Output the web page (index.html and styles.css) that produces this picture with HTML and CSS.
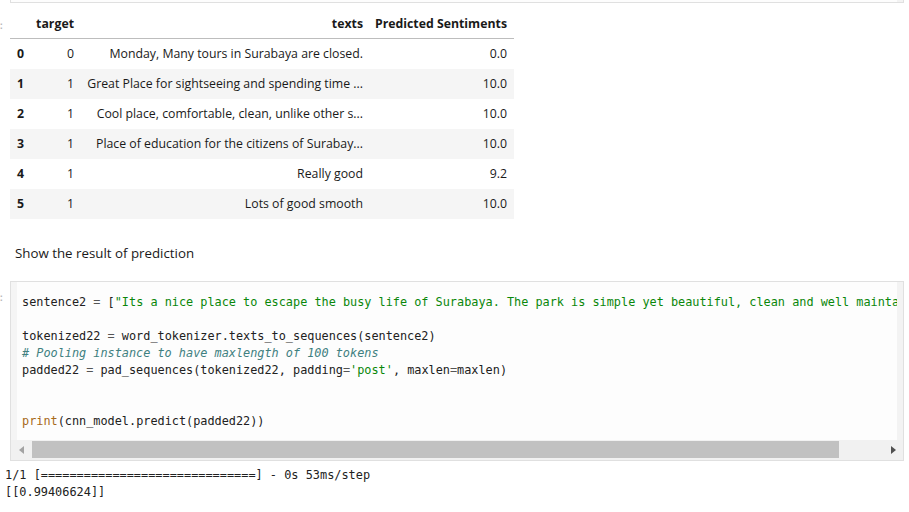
FILE: index.html
```html
<!DOCTYPE html>
<html>
<head>
<meta charset="utf-8">
<link rel="stylesheet" href="styles.css">
</head>
<body>
<div class="prev-cell"><div class="prev-fill"></div><div class="prev-strip"></div></div>

<div class="out-row">
  <div class="prompt prompt-table">:</div>
  <table class="df">
    <colgroup>
      <col class="c-idx"><col class="c-target"><col class="c-texts"><col class="c-pred">
    </colgroup>
    <thead>
      <tr><th></th><th>target</th><th>texts</th><th>Predicted Sentiments</th></tr>
    </thead>
    <tbody>
      <tr><th>0</th><td>0</td><td>Monday, Many tours in Surabaya are closed.</td><td>0.0</td></tr>
      <tr><th>1</th><td>1</td><td>Great Place for sightseeing and spending time ...</td><td>10.0</td></tr>
      <tr><th>2</th><td>1</td><td>Cool place, comfortable, clean, unlike other s...</td><td>10.0</td></tr>
      <tr><th>3</th><td>1</td><td>Place of education for the citizens of Surabay...</td><td>10.0</td></tr>
      <tr><th>4</th><td>1</td><td>Really good</td><td>9.2</td></tr>
      <tr><th>5</th><td>1</td><td>Lots of good smooth</td><td>10.0</td></tr>
    </tbody>
  </table>
</div>

<div class="md">Show the result of prediction</div>

<div class="code-row">
  <div class="prompt prompt-code">:</div>
  <div class="cell">
    <div class="cell-body">
      <div class="gutter"></div>
      <pre class="editor"><span class="v">sentence2</span> <span class="o">=</span> [<span class="s">"Its a nice place to escape the busy life of Surabaya. The park is simple yet beautiful, clean and well maintained. Good for family."</span>]

<span class="v">tokenized22</span> <span class="o">=</span> <span class="v">word_tokenizer</span>.<span class="v">texts_to_sequences</span>(<span class="v">sentence2</span>)
<span class="c"># Pooling instance to have maxlength of 100 tokens</span>
<span class="v">padded22</span> <span class="o">=</span> <span class="v">pad_sequences</span>(<span class="v">tokenized22</span>, <span class="v">padding</span><span class="o">=</span><span class="s">'post'</span>, <span class="v">maxlen</span><span class="o">=</span><span class="v">maxlen</span>)


<span class="b">print</span>(<span class="v">cnn_model</span>.<span class="v">predict</span>(<span class="v">padded22</span>))</pre>
      <div class="vstrip"></div>
    </div>
    <div class="hscroll">
      <div class="sbtn"><span class="tri tri-left"></span></div>
      <div class="thumb"></div>
      <div class="track-rest"></div>
      <div class="sbtn"><span class="tri tri-right"></span></div>
    </div>
  </div>
</div>

<pre class="output">1/1 [==============================] - 0s 53ms/step
[[0.99406624]]</pre>
</body>
</html>
```
FILE: styles.css
```css
html, body {
  margin: 0;
  padding: 0;
  background: #ffffff;
}

body {
  font-family: "Open Sans", "Noto Sans", sans-serif;
  color: #1a1a1a;
  width: 909px;
  overflow: hidden;
}

/* bottom edge of the previous code cell */
.prev-cell {
  margin-left: 10px;
  width: 894px;
  height: 3px;
  box-sizing: border-box;
  border: 1px solid #e0e0e0;
  border-top: none;
  display: flex;
}
.prev-fill {
  flex: 1;
  background: #fdfdfd;
}
.prev-strip {
  width: 6px;
  background: #f3f3f3;
}

/* prompt column (mostly clipped) */
.prompt {
  flex: none;
  font-family: "DejaVu Sans Mono", monospace;
  font-size: 11px;
  color: #b8b8b8;
  line-height: 14px;
  overflow: hidden;
  margin-left: -2px;
  width: 12px;
}
.prompt-table {
  padding-top: 10px;
}
.prompt-code {
  padding-top: 10px;
}

/* dataframe output */
.out-row {
  display: flex;
  margin-top: 6px;
}

.df {
  border-collapse: collapse;
  table-layout: fixed;
  width: 504px;
  font-size: 12.3px;
  color: #1a1a1a;
}
.c-idx { width: 20px; }
.c-target { width: 51px; }
.c-texts { width: 289px; }
.c-pred { width: 144px; }

.df th,
.df td {
  padding: 0 7px 0 0;
  text-align: right;
  vertical-align: middle;
  white-space: nowrap;
  height: 30px;
  line-height: 16px;
}
.df thead th {
  font-weight: 700;
  border-bottom: 1px solid #bdbdbd;
  height: 29px;
}
.df tbody th {
  font-weight: 700;
  text-align: left;
  padding-left: 7px;
  padding-right: 0;
}
.df tbody tr:nth-child(odd) {
  background: #ffffff;
}
.df tbody tr:nth-child(even) {
  background: #f5f5f5;
}

/* markdown cell */
.md {
  margin-top: 24px;
  padding-left: 15px;
  font-size: 13.3px;
  line-height: 20px;
  color: #1a1a1a;
}

/* code cell */
.code-row {
  display: flex;
  margin-top: 18px;
}

.cell {
  width: 894px;
  box-sizing: border-box;
  border: 1px solid #e0e0e0;
  background: #f5f5f5;
  display: flex;
  flex-direction: column;
}

.cell-body {
  display: flex;
  height: 158px;
}
.gutter {
  width: 6px;
  flex: none;
  background: #f5f5f5;
}
.vstrip {
  width: 6px;
  flex: none;
  background: #f3f3f3;
}
.editor {
  flex: 1;
  min-width: 0;
  margin: 0;
  padding: 12px 0 10px 5px;
  background: #fdfdfd;
  overflow: hidden;
  white-space: pre;
  font-family: "DejaVu Sans Mono", "Liberation Mono", monospace;
  font-size: 11.85px;
  line-height: 17px;
  color: #212121;
}
.editor .v { color: #212121; }
.editor .o { color: #555555; }
.editor .s { color: #0a870a; }
.editor .c { color: #408080; font-style: italic; }
.editor .b { color: #a86a1a; }

/* horizontal scrollbar */
.hscroll {
  display: flex;
  height: 20px;
  background: #f1f1f1;
}
.sbtn {
  width: 20px;
  flex: none;
  display: flex;
  align-items: center;
  justify-content: center;
}
.thumb {
  width: 807px;
  flex: none;
  height: 17px;
  margin-top: 1px;
  margin-left: 1px;
  background: #c1c1c1;
}
.track-rest {
  flex: 1;
}
.tri {
  width: 0;
  height: 0;
  border-top: 4px solid transparent;
  border-bottom: 4px solid transparent;
}
.tri-left {
  border-right: 5px solid #a3a3a3;
}
.tri-right {
  border-left: 5px solid #505050;
}

/* stream output */
.output {
  margin: 0;
  padding: 6px 0 0 5px;
  font-family: "DejaVu Sans Mono", "Liberation Mono", monospace;
  font-size: 11.9px;
  line-height: 17px;
  color: #212121;
}
```
